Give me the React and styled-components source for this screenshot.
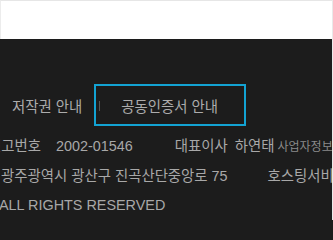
import React from 'react';
import styled, { createGlobalStyle } from 'styled-components';

const GlobalStyle = createGlobalStyle`
  html, body {
    margin: 0;
    padding: 0;
    background: #1c1c1c;
  }
  body {
    font-family: "Liberation Sans", "Noto Sans CJK KR", sans-serif;
  }
`;

const Page = styled.div`
  width: 332px;
  min-height: 208px;
  overflow: hidden;
  display: flex;
  flex-direction: column;
  border-right: 1px solid #e9e9e9;
`;

const Header = styled.div`
  height: 38px;
  background: #fff;
  border-top: 1px solid #e6e6e6;
  border-left: 1px solid #ececec;
`;

const Footer = styled.footer`
  flex: 1;
  background: #1c1c1c;
  padding-top: 45px;
  overflow: hidden;
  color: #a8a8a8;
  font-size: 14.4px;
`;

const LinkBar = styled.ul`
  display: flex;
  align-items: center;
  list-style: none;
  margin: 0;
  padding: 0 0 0 12px;
  height: 42px;
`;

const LinkItem = styled.li`
  display: flex;
  align-items: center;
  height: 100%;
  box-sizing: border-box;
  margin-right: ${(p) => (p.$focused ? '0' : '12px')};
  padding: ${(p) => (p.$focused ? '0 26px 0 3px' : '0')};
  border: ${(p) => (p.$focused ? '2px solid #13a3d3' : 'none')};
  color: #acacac;
  white-space: nowrap;
`;

const Separator = styled.span`
  display: inline-block;
  width: 1px;
  height: 10px;
  margin: 2px 21px 0 0;
  background: #555;
`;

const Info = styled.div`
  margin-top: 6px;
`;

const Row = styled.div`
  display: flex;
  align-items: baseline;
  white-space: nowrap;
  line-height: 29px;
  margin-left: ${(p) => p.$shift || 0}px;
`;

const Item = styled.span`
  display: inline-flex;
  align-items: baseline;
  flex-shrink: 0;
  gap: ${(p) => p.$gap || 8}px;
  margin-right: ${(p) => p.$space || 0}px;
`;

const Small = styled.span`
  flex-shrink: 0;
  font-size: 12px;
  color: #8a8a8a;
  margin-left: 3px;
`;

export default function App() {
  return (
    <>
      <GlobalStyle />
      <Page>
        <Header />
        <Footer>
          <LinkBar>
            <LinkItem>저작권 안내</LinkItem>
            <LinkItem $focused>
              <Separator />
              공동인증서 안내
            </LinkItem>
          </LinkBar>
          <Info>
            <Row $shift={-12}>
              <Item $gap={15} $space={42}>
                <span>신고번호</span>
                <span>2002-01546</span>
              </Item>
              <Item $gap={7}>
                <span>대표이사</span>
                <span>하연태</span>
              </Item>
              <Small>사업자정보확인</Small>
            </Row>
            <Row $shift={1}>
              <Item $space={40}>광주광역시 광산구 진곡산단중앙로 75</Item>
              <Item>호스팅서비스</Item>
            </Row>
            <Row $shift={-1}>
              <Item>ALL RIGHTS RESERVED</Item>
            </Row>
          </Info>
        </Footer>
      </Page>
    </>
  );
}
